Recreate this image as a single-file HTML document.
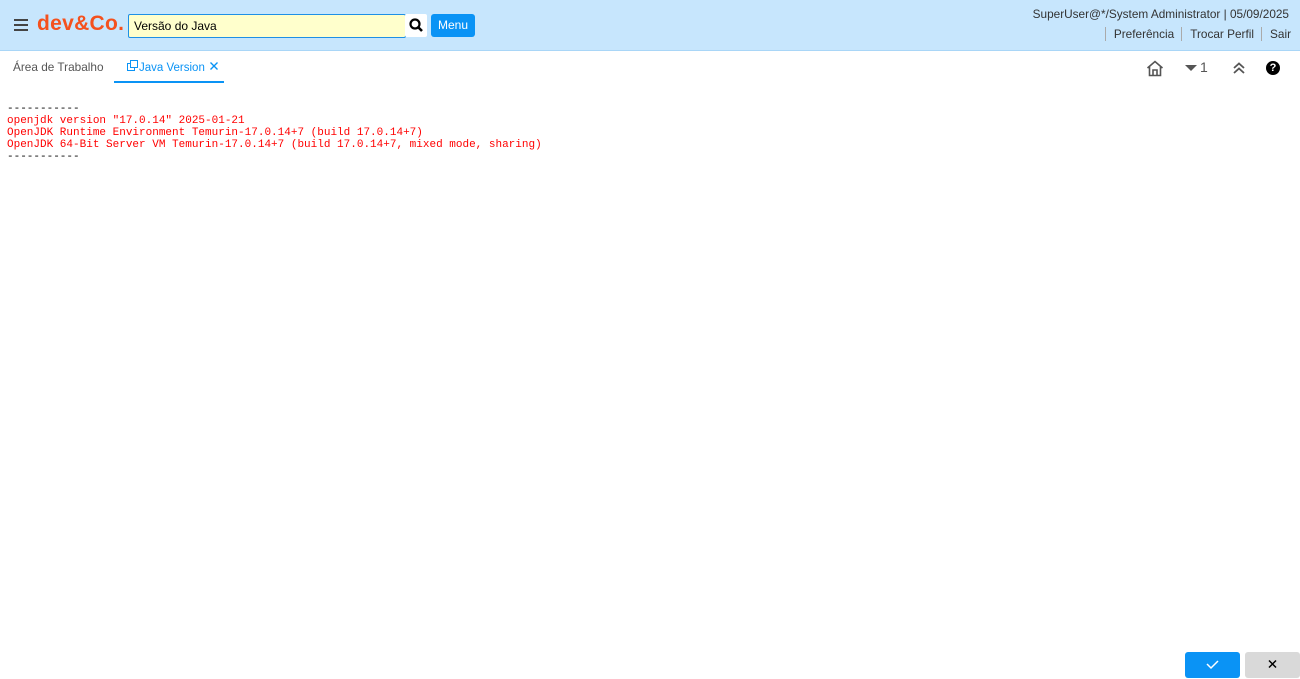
<!DOCTYPE html>
<html><head><meta charset="utf-8"><style>
body{margin:0;width:1300px;height:674px;overflow:hidden;background:#fff;font-family:"Liberation Sans",sans-serif;position:relative}
.top{position:absolute;left:0;top:0;width:1300px;height:50px;background:#c7e6fd;border-bottom:1px solid #a9d6f7}
.abs{position:absolute}
pre{position:absolute;left:7px;top:103px;margin:0;font-family:"Liberation Mono",monospace;font-size:11px;line-height:12px;color:#f00}
</style></head><body>
<div class="top">
 <div class="abs" style="left:14px;top:19px;width:14px;height:2px;background:#444;box-shadow:0 5px 0 #444,0 10px 0 #444"></div>
 <div class="abs" style="left:37px;top:12px;font-size:21px;font-weight:bold;color:#f4511e;letter-spacing:0.3px">dev&amp;Co.</div>
 <div class="abs" style="left:128px;top:14px;height:22px;background:#ffffcc;border:1px solid #1e90e6;border-radius:2px;font-size:12px;line-height:22px;padding-left:5px;width:271px">Versão do Java</div>
 <div class="abs" style="left:405px;top:14px;width:22px;height:23px;background:#fff;border-radius:2px">
  <svg width="22" height="23"><circle cx="10" cy="10" r="4.5" stroke="#000" stroke-width="2.2" fill="none"/><line x1="13" y1="13" x2="17" y2="17" stroke="#000" stroke-width="2.6"/></svg></div>
 <div class="abs" style="left:431px;top:14px;width:44px;height:23px;background:#0a93f5;border-radius:3px;color:#fff;font-size:12px;line-height:23px;text-align:center">Menu</div>
 <div class="abs" style="right:11px;top:7px;font-size:11.8px;color:#333">SuperUser@*/System Administrator | 05/09/2025</div>
 <div class="abs" style="right:9px;top:27px;font-size:11.8px;color:#333;white-space:nowrap">
  <span style="border-left:1px solid #aaa;padding:0 7px 0 8px">Preferência</span><span style="border-left:1px solid #aaa;padding:0 7px 0 8px">Trocar Perfil</span><span style="border-left:1px solid #aaa;padding:0 0 0 8px">Sair</span></div>
</div>
<div class="abs" style="left:13px;top:60px;font-size:11.8px;color:#555">Área de Trabalho</div>
<div class="abs" style="left:114px;top:81px;width:110px;height:2px;background:#0a93f5"></div>
<div class="abs" style="left:127px;top:60px;font-size:11.5px;color:#0a93f5;white-space:nowrap">
 <svg width="12" height="12" style="vertical-align:-1px"><rect x="0.5" y="3.5" width="7" height="7" fill="none" stroke="#0a93f5"/><rect x="3.5" y="0.5" width="7" height="7" fill="#fff" stroke="#0a93f5"/></svg>Java Version<svg width="10" height="10" style="margin-left:4px"><path d="M1.5 1.5L8.5 8.5M8.5 1.5L1.5 8.5" stroke="#0a93f5" stroke-width="1.4"/></svg></div>
<svg class="abs" style="left:1146px;top:60px" width="18" height="17"><path d="M1.5 8L9 1.5L16.5 8M3.5 6.5V15.5H14.5V6.5M7 15.5V10H11V15.5" fill="none" stroke="#555" stroke-width="1.6"/></svg>
<svg class="abs" style="left:1185px;top:64px" width="12" height="8"><path d="M0 1H12L6 7Z" fill="#555"/></svg>
<div class="abs" style="left:1200px;top:59px;font-size:14px;color:#555">1</div>
<svg class="abs" style="left:1232px;top:61px" width="14" height="14"><path d="M2 7L7 2.5L12 7M2 12L7 7.5L12 12" fill="none" stroke="#555" stroke-width="1.8"/></svg>
<div class="abs" style="left:1266px;top:61px;width:14px;height:14px;border-radius:50%;background:#000;color:#fff;font-size:11px;font-weight:bold;line-height:14px;text-align:center">?</div>
<pre><span style="color:#000">-----------</span>
openjdk version "17.0.14" 2025-01-21
OpenJDK Runtime Environment Temurin-17.0.14+7 (build 17.0.14+7)
OpenJDK 64-Bit Server VM Temurin-17.0.14+7 (build 17.0.14+7, mixed mode, sharing)
<span style="color:#000">-----------</span></pre>
<div class="abs" style="left:1185px;top:652px;width:55px;height:26px;background:#0a93f5;border-radius:3px"><svg width="55" height="22"><path d="M22 12L26 16L33 9" fill="none" stroke="#fff" stroke-width="1.5"/></svg></div>
<div class="abs" style="left:1245px;top:652px;width:55px;height:26px;background:#d9d9d9;border-radius:3px"><svg width="55" height="22"><path d="M24 8.5L31 15.5M31 8.5L24 15.5" stroke="#000" stroke-width="1.5"/></svg></div>
</body></html>
